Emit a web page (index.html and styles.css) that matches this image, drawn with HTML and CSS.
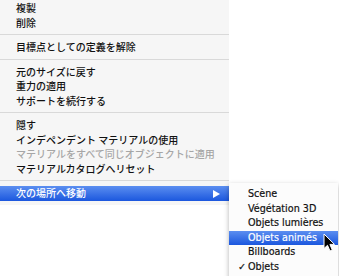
FILE: index.html
```html
<!DOCTYPE html>
<html lang="ja">
<head>
    <meta charset="UTF-8">
    <meta name="viewport" content="width=device-width, initial-scale=1.0">
    <title>Menu</title>
    <link rel="stylesheet" href="styles.css">
</head>
<body>
    <div class="menu">
        <div class="item">複製</div>
        <div class="item">削除</div>
        <div class="sep"></div>
        <div class="item">目標点としての定義を解除</div>
        <div class="sep"></div>
        <div class="item">元のサイズに戻す</div>
        <div class="item">重力の適用</div>
        <div class="item">サポートを続行する</div>
        <div class="sep"></div>
        <div class="item">隠す</div>
        <div class="item">インデペンデント マテリアルの使用</div>
        <div class="item disabled">マテリアルをすべて同じオブジェクトに適用</div>
        <div class="item">マテリアルカタログへリセット</div>
        <div class="sep"></div>
        <div class="item active">次の場所へ移動<span class="arrow"></span></div>
    </div>

    <div class="submenu">
        <div class="sub-item">Scène</div>
        <div class="sub-item">Végétation 3D</div>
        <div class="sub-item">Objets lumières</div>
        <div class="sub-item active">Objets animés</div>
        <div class="sub-item">Billboards</div>
        <div class="sub-item checked">Objets</div>
    </div>

    <svg class="cursor" width="13" height="19" viewBox="0 0 13 19">
        <path d="M1 1 L1 15.5 L4.5 12.3 L7 18 L9.3 17 L6.9 11.4 L11.5 11.4 Z" fill="#000" stroke="#fff" stroke-width="1" stroke-linejoin="round"/>
    </svg>
</body>
</html>
```

FILE: styles.css
```css
body {
    margin: 0;
    background-color: #ffffff;
    font-family: "Noto Sans CJK JP", "DejaVu Sans", sans-serif;
    position: relative;
    height: 276px;
    overflow: hidden;
}
.menu {
    width: 229px;
    background-color: #f6f6f6;
    padding: 1px 0 4px;
}
.item {
    height: 14.5px;
    line-height: 14.5px;
    padding-left: 16px;
    font-size: 10px;
    font-weight: 500;
    color: #111111;
    white-space: nowrap;
    position: relative;
}
.item.disabled {
    color: #a6a6a6;
}
.item.active {
    background: linear-gradient(#5b8ef0, #1b57de);
    color: #ffffff;
}
.arrow {
    position: absolute;
    right: 9px;
    top: 3.5px;
    width: 0;
    height: 0;
    border-top: 4px solid transparent;
    border-bottom: 4px solid transparent;
    border-left: 7px solid #ffffff;
}
.sep {
    height: 10px;
    position: relative;
}
.sep::after {
    content: "";
    position: absolute;
    left: 0;
    right: 0;
    top: 4px;
    height: 1px;
    background-color: #d9d9d9;
}
.submenu {
    position: absolute;
    left: 229px;
    top: 183px;
    width: 109px;
    padding-top: 4px;
    padding-bottom: 6px;
    background-color: #fcfcfc;
    box-shadow: 0 2px 5px rgba(0, 0, 0, 0.3);
}
.sub-item {
    height: 14.5px;
    line-height: 14.5px;
    padding-left: 19px;
    font-family: "DejaVu Sans", sans-serif;
    font-size: 9.6px;
    color: #111111;
    white-space: nowrap;
    position: relative;
    -webkit-text-stroke: 0.2px #111111;
}
.sub-item.active {
    background: linear-gradient(#5b8ef0, #1b57de);
    color: #ffffff;
    -webkit-text-stroke: 0.2px #ffffff;
}
.sub-item.checked::before {
    content: "✓";
    position: absolute;
    left: 9px;
}
.cursor {
    position: absolute;
    left: 323px;
    top: 233px;
}
```
